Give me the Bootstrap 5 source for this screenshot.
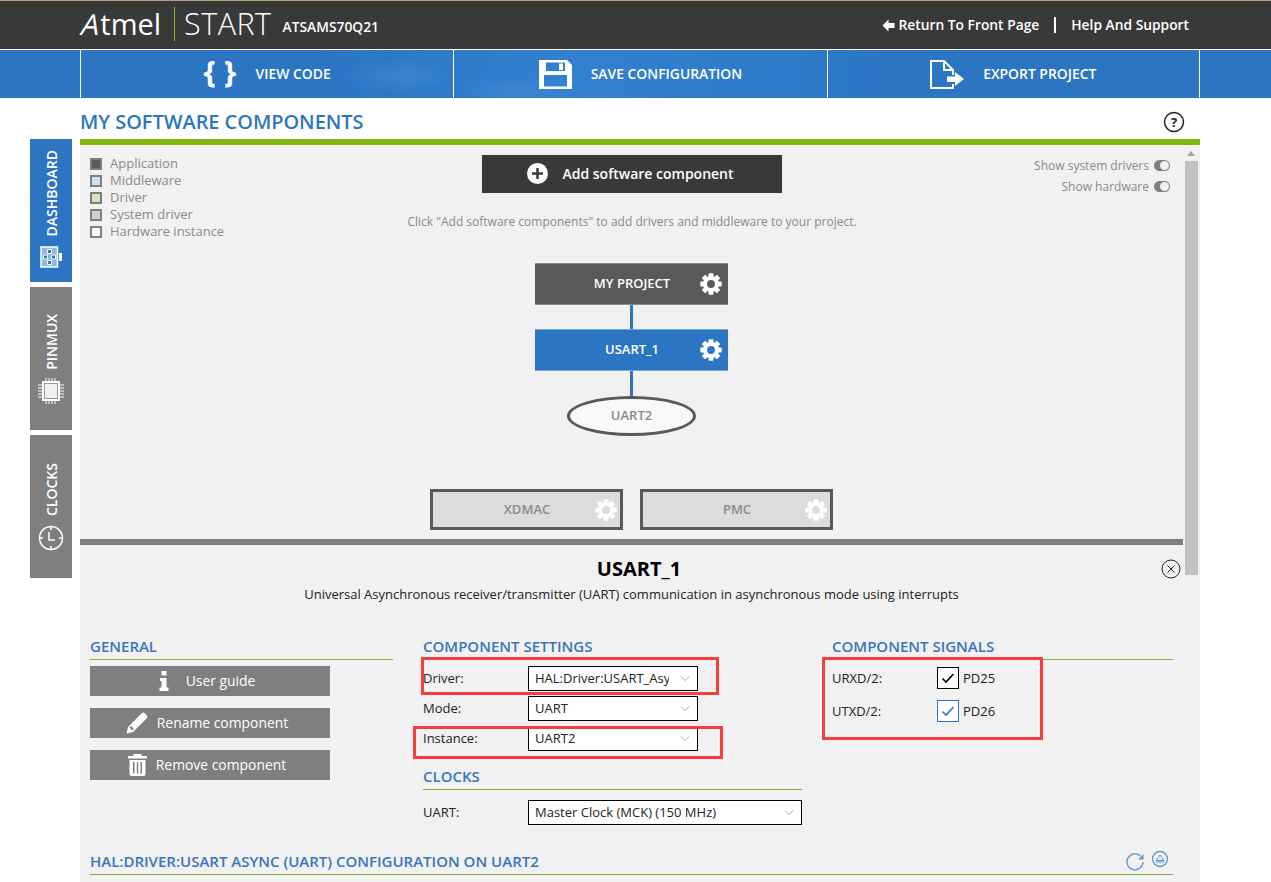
<!DOCTYPE html>
<html lang="en">
<head>
    <meta charset="UTF-8">
    <meta name="viewport" content="width=device-width, initial-scale=1.0">
    <title>Atmel START</title>
    <link rel="stylesheet" href="https://cdn.jsdelivr.net/npm/bootstrap@5.3.0/dist/css/bootstrap.min.css">
    <style>
        body {
            background: #fff;
            font-family: "Open Sans", "Liberation Sans", sans-serif;
            font-size: 13px;
            color: #222;
            height: 882px;
            overflow: hidden;
        }
        .top-bar {
            height: 50px;
            background: #383938;
            border-top: 1px solid #b79c7c;
            border-bottom: 1px solid #fff;
            padding: 0 82px 2px 82px;
            color: #fff;
        }
        .logo-atmel { font-size: 29px; font-weight: 400; width: 92px; letter-spacing: 0; }
        .logo-a { display: inline-block; transform: skewX(-14deg); }
        .logo-rule { width: 1px; height: 34px; background: #8dbb25; }
        .logo-start { font-size: 30.5px; font-weight: 300; margin-left: 9px; letter-spacing: 0.5px; }
        .logo-part { font-size: 13.8px; font-weight: 600; margin: 7px 0 0 11px; }
        .top-links { margin-top: 2px; }
        .top-link { font-size: 13.8px; font-weight: 600; color: #fff; text-decoration: none; }
        .top-rule { width: 2px; height: 16px; background: #fff; margin: 0 15px; }
        .tool-bar {
            height: 48px;
            padding-left: 80px;
            background:
                radial-gradient(ellipse 60px 18px at 400px 26px, rgba(255, 255, 255, .07), transparent),
                radial-gradient(ellipse 70px 14px at 520px 40px, rgba(255, 255, 255, .06), transparent),
                linear-gradient(90deg, #2b75c3 25%, #3280d0 45%, #2f7bca 60%, #2b75c3 70%);
        }
        .tool-item {
            width: 373.3px;
            padding-top: 1px;
            border-left: 1px solid #fff;
            color: #fff;
            font-size: 13.9px;
            font-weight: 600;
            text-decoration: none;
            gap: 19px;
        }
        .tool-item:last-child { border-right: 1px solid #fff; }
        .tool-glyph { font-size: 31px; font-weight: 700; line-height: 1; width: 33px; white-space: nowrap; margin-top: -6px; }
        .side-tabs { width: 42px; margin: 41px 8px 0 30px; gap: 5px; }
        .side-tab {
            height: 143px;
            background: #7f7f7f;
            color: #fff;
            font-size: 14px;
            font-weight: 600;
            gap: 10px;
        }
        .side-tab.is-active { background: #2b75c3; padding-bottom: 14px; }
        .side-tab.is-chip { padding-bottom: 26px; gap: 8px; }
        .side-tab.is-clock { padding-bottom: 27px; gap: 9px; }
        .side-label { writing-mode: vertical-rl; transform: rotate(180deg); }
        .work-col { width: 1120px; }
        .page-title { height: 41px; padding-top: 7px; }
        .page-title h1 { font-size: 19.9px; font-weight: 600; color: #2b75c3; margin: 0; }
        .help-mark { margin-right: 15px; }
        .work-panel {
            height: 743px;
            background: #f1f1f1;
            border-top: 6px solid #80b80f;
            position: relative;
            overflow: hidden;
        }
        .work-inner { width: 1103px; }
        .scroll-thumb { position: absolute; left: 1105px; top: 16px; width: 13px; height: 414px; background: #c1c1c1; }
        .scroll-up {
            position: absolute;
            left: 1107px;
            top: 6px;
            border: 4px solid transparent;
            border-top: 0;
            border-bottom: 5px solid #a3a3a3;
        }
        .canvas-top {
            height: 118px;
            padding: 10px 13px 0 10px;
            display: grid;
            grid-template-columns: 312px 460px 308px;
        }
        .legend-row { height: 17px; color: #8a8a8a; gap: 8px; line-height: 17px; }
        .legend-box { width: 12px; height: 12px; border: 2px solid #7f7f7f; }
        .legend-app { background: #58595b; }
        .legend-mid { background: #c9e2f7; }
        .legend-drv { background: #d5e4bd; }
        .legend-sys { background: #d0d0d0; }
        .legend-hw { background: #fff; }
        .add-btn {
            width: 300px;
            height: 38px;
            padding: 0 3px 2px 0;
            background: #383938;
            color: #fff;
            font-size: 14px;
            font-weight: 600;
            border-radius: 0;
            border: 0;
            gap: 14px;
        }
        .add-btn:hover { background: #383938; color: #fff; }
        .hint-text { color: #8a8a8a; font-size: 12px; margin-top: 20px; }
        .switch-row { color: #8a8a8a; font-size: 12px; gap: 5px; height: 21px; padding-top: 1px; }
        .mini-switch { width: 16px; height: 11px; background: #7f7f7f; border-radius: 6px; position: relative; margin-top: -1px; }
        .mini-switch::after { content: ""; position: absolute; right: 1px; top: 1px; width: 9px; height: 9px; border-radius: 50%; background: #f1f1f1; }
        .node-box {
            width: 193px;
            height: 42px;
            color: #fff;
            font-weight: 600;
            font-size: 13px;
            padding: 0 6px 0 0;
        }
        .node-name { flex: 1; text-align: center; padding-left: 29px; }
        .node-dark { background: #58595b; border-top: 1px solid #8d8d8d; border-bottom: 1px solid #8d8d8d; }
        .node-blue { background: #2b75c3; border-top: 1px solid #7fa9d9; border-bottom: 1px solid #7fa9d9; }
        .node-sys { background: #dcdcdc; border: 3px solid #58595b; color: #8a8a8a; height: 41px; padding-right: 3px; }
        .node-sys .node-name { padding-left: 26px; }
        .node-line { width: 3px; height: 24px; background: #2b75c3; }
        .node-line.is-long { height: 25px; }
        .node-oval {
            width: 129px;
            height: 40px;
            border: 3px solid #58595b;
            border-radius: 50%;
            background: #f9f9f9;
            color: #8a8a8a;
            font-weight: 600;
            font-size: 13px;
        }
        .sys-row { gap: 17px; margin-top: 53px; }
        .split-bar { height: 6px; margin-top: 9px; background: #7f7f7f; }
        .detail-head { height: 91px; padding-top: 10px; position: relative; }
        .detail-head h2 { font-size: 20px; font-weight: 700; color: #000; margin: 0 0 3px; line-height: 27px; padding-left: 15px; }
        .detail-head p { font-size: 13px; margin: 0; line-height: 18px; }
        .close-mark { position: absolute; left: 1081px; top: 14px; }
        .detail-grid {
            display: grid;
            grid-template-columns: 303px 379px 341px;
            gap: 30px;
            padding-left: 10px;
        }
        .sec-head {
            font-size: 15px;
            font-weight: 600;
            color: #3a75bd;
            height: 24px;
            line-height: 21px;
            border-bottom: 1px solid #80b32e;
            text-transform: uppercase;
            margin: 0;
        }
        .sec-head.no-rule { border-bottom-color: transparent; }
        .sec-head.is-clocks { margin-top: 15px; }
        .act-list { gap: 12px; margin-top: 6px; }
        .act-btn {
            width: 240px;
            height: 30px;
            padding: 0 6px 0 0;
            background: #7f7f7f;
            color: #fff;
            border: 0;
            border-radius: 0;
            font-size: 13.9px;
            gap: 9px;
        }
        .act-btn:hover { background: #7f7f7f; color: #fff; }
        .field-row { height: 25px; position: relative; margin-top: 5px; }
        .field-row.is-first { margin-top: 6px; }
        .field-row.is-clock { margin-top: 10px; }
        .field-label { width: 105px; font-size: 13px; }
        .field-select {
            width: 170px;
            height: 25px;
            padding: 0 28px 0 6px;
            font-size: 13px;
            line-height: 23px;
            color: #222;
            border: 1px solid #000;
            border-radius: 0;
            background-color: #fff;
            background-position: right 7px center;
            background-size: 10px 7px;
            background-image: url("data:image/svg+xml,%3csvg xmlns='http://www.w3.org/2000/svg' viewBox='0 0 12 8'%3e%3cpath fill='none' stroke='%23aaa' stroke-width='1.2' d='M1 1.5l5 5 5-5'/%3e%3c/svg%3e");
        }
        .field-select.is-wide { width: 274px; }
        .red-frame { position: absolute; border: 3px solid #f43e3f; pointer-events: none; }
        .red-driver { left: -2px; top: -9px; width: 298px; height: 38px; }
        .red-instance { left: -10px; top: 0; width: 310px; height: 33px; }
        .red-signals { left: -10px; top: 21px; width: 221px; height: 83px; }
        .signal-col { position: relative; }
        .signal-row { height: 22px; margin-top: 11px; padding-top: 1px; }
        .signal-row.is-first { margin-top: 7px; }
        .signal-check.form-check-input {
            width: 22px;
            height: 22px;
            margin: -1px 4px 0 0;
            border: 1px solid #000;
            border-radius: 0;
            background-color: #fff;
            background-size: 16px;
            background-image: url("data:image/svg+xml,%3csvg xmlns='http://www.w3.org/2000/svg' viewBox='0 0 16 16'%3e%3cpath fill='none' stroke='%23000' stroke-width='1.6' d='M2.5 8.5l3.5 3.5 7.5-8'/%3e%3c/svg%3e");
        }
        .signal-check.form-check-input.is-blue {
            border-color: #2b75c3;
            background-image: url("data:image/svg+xml,%3csvg xmlns='http://www.w3.org/2000/svg' viewBox='0 0 16 16'%3e%3cpath fill='none' stroke='%232b75c3' stroke-width='1.6' d='M2.5 8.5l3.5 3.5 7.5-8'/%3e%3c/svg%3e");
        }
        .config-head { margin: 26px 10px 0 10px; position: relative; }
        .config-icons { position: absolute; right: 4px; top: -1px; gap: 6px; }
        .config-icons svg:first-child { margin-top: 1px; }
    </style>
</head>
<body>
    <svg width="0" height="0" class="position-absolute">
        <symbol id="gear" viewBox="0 0 24 24">
            <g fill="currentColor">
                <rect x="9.300" y="0.300" width="5.400" height="5" rx="1"/>
                <rect x="9.300" y="0.300" width="5.400" height="5" rx="1" transform="rotate(45 12 12)"/>
                <rect x="9.300" y="0.300" width="5.400" height="5" rx="1" transform="rotate(90 12 12)"/>
                <rect x="9.300" y="0.300" width="5.400" height="5" rx="1" transform="rotate(135 12 12)"/>
                <rect x="9.300" y="0.300" width="5.400" height="5" rx="1" transform="rotate(180 12 12)"/>
                <rect x="9.300" y="0.300" width="5.400" height="5" rx="1" transform="rotate(225 12 12)"/>
                <rect x="9.300" y="0.300" width="5.400" height="5" rx="1" transform="rotate(270 12 12)"/>
                <rect x="9.300" y="0.300" width="5.400" height="5" rx="1" transform="rotate(315 12 12)"/>
            </g>
            <circle cx="12" cy="12" r="6.500" fill="none" stroke="currentColor" stroke-width="4.500"/>
        </symbol>
    </svg>

    <div class="top-bar d-flex align-items-center">
        <span class="logo-atmel"><span class="logo-a">A</span>tmel</span>
        <span class="logo-rule"></span>
        <span class="logo-start">START</span>
        <span class="logo-part">ATSAMS70Q21</span>
        <div class="top-links ms-auto d-flex align-items-center">
            <svg width="13" height="13" viewBox="0 0 13 13" class="me-1"><path fill="#fff" d="M6.500 0.500L0.500 6.500 6.500 12.500V9H12.500V4H6.500z"/></svg>
            <a href="#" class="top-link">Return To Front Page</a>
            <span class="top-rule"></span>
            <a href="#" class="top-link">Help And Support</a>
        </div>
    </div>

    <div class="tool-bar d-flex">
        <a href="#" class="tool-item d-flex align-items-center justify-content-center">
            <span class="tool-glyph">{ }</span><span>VIEW CODE</span>
        </a>
        <a href="#" class="tool-item d-flex align-items-center justify-content-center">
            <svg width="33" height="29" viewBox="0 0 33 29"><path fill="#fff" fill-rule="evenodd" d="M0 0H28L33 5V29H0zM7 2.500V11H26V2.500zM20 3.500H24V10H20zM5 15V26.500H28V15z"/></svg>
            <span>SAVE CONFIGURATION</span>
        </a>
        <a href="#" class="tool-item d-flex align-items-center justify-content-center">
            <svg width="34" height="29" viewBox="0 0 34 29"><path fill="none" stroke="#fff" stroke-width="2" d="M1 1H14L23 10V28H1zM14 1V10H23"/><path fill="#2b75c3" d="M17 15H25V24H17z"/><path fill="#fff" d="M17 16.500H25V12L34 19 25 26V22H17z"/></svg>
            <span>EXPORT PROJECT</span>
        </a>
    </div>

    <div class="d-flex">
        <div class="side-tabs d-flex flex-column">
            <div class="side-tab is-active d-flex flex-column align-items-center justify-content-end">
                <span class="side-label">DASHBOARD</span>
                <svg width="22" height="22" viewBox="0 0 22 22"><path fill="#8fb9e4" stroke="#fff" stroke-width="1.500" d="M1 1H17.500V21H1z"/><path fill="#fff" d="M19 7H22V15H19z"/><path fill="#2b75c3" stroke="#fff" d="M7.500 3.500H11.500V7.500H7.500zM3.500 9H7.500V13H3.500zM11.500 9H15.500V13H11.500zM7.500 14.500H11.500V18.500H7.500z"/></svg>
            </div>
            <div class="side-tab is-chip d-flex flex-column align-items-center justify-content-end">
                <span class="side-label">PINMUX</span>
                <svg width="26" height="26" viewBox="0 0 26 26"><path fill="#fff" d="M4 3H22V23H4z"/><path fill="#9a9a9a" d="M6 5H20V21H6z"/><path fill="#f2f2f2" d="M7 6H19V20H7z"/><path stroke="#fff" d="M8 0V3M11 0V3M14 0V3M17 0V3M8 23V26M11 23V26M14 23V26M17 23V26M0 7H4M0 10H4M0 13H4M0 16H4M0 19H4M22 7H26M22 10H26M22 13H26M22 16H26M22 19H26"/></svg>
            </div>
            <div class="side-tab is-clock d-flex flex-column align-items-center justify-content-end">
                <span class="side-label">CLOCKS</span>
                <svg width="26" height="26" viewBox="0 0 26 26"><circle cx="13" cy="13" r="11.500" fill="none" stroke="#fff" stroke-width="1.500"/><path fill="none" stroke="#fff" stroke-width="1.500" d="M13 1.500V5M13 21V24.500M1.500 13H5M21 13H24.500M11 7V15H17"/></svg>
            </div>
        </div>

        <div class="work-col">
            <div class="page-title d-flex align-items-center justify-content-between">
                <h1>MY SOFTWARE COMPONENTS</h1>
                <svg class="help-mark" width="22" height="22" viewBox="0 0 22 22"><circle cx="11" cy="11" r="9.500" fill="none" stroke="#222" stroke-width="1.500"/><text x="11" y="15.500" text-anchor="middle" font-size="13" font-weight="700" fill="#222" font-family="Open Sans">?</text></svg>
            </div>
            <div class="work-panel">
                <div class="scroll-up"></div>
                <div class="scroll-thumb"></div>
                <div class="work-inner">
                    <div class="canvas-top">
                        <div>
                            <div class="legend-row d-flex align-items-center"><span class="legend-box legend-app"></span>Application</div>
                            <div class="legend-row d-flex align-items-center"><span class="legend-box legend-mid"></span>Middleware</div>
                            <div class="legend-row d-flex align-items-center"><span class="legend-box legend-drv"></span>Driver</div>
                            <div class="legend-row d-flex align-items-center"><span class="legend-box legend-sys"></span>System driver</div>
                            <div class="legend-row d-flex align-items-center"><span class="legend-box legend-hw"></span>Hardware instance</div>
                        </div>
                        <div class="d-flex flex-column align-items-center">
                            <button class="btn add-btn d-flex align-items-center justify-content-center">
                                <svg width="21" height="21" viewBox="0 0 21 21"><circle cx="10.500" cy="10.500" r="10.500" fill="#fff"/><path stroke="#383938" stroke-width="2.500" d="M10.500 5V16M5 10.500H16"/></svg>
                                Add software component
                            </button>
                            <div class="hint-text">Click "Add software components" to add drivers and middleware to your project.</div>
                        </div>
                        <div class="d-flex flex-column align-items-end">
                            <div class="switch-row d-flex align-items-center">Show system drivers <span class="mini-switch"></span></div>
                            <div class="switch-row d-flex align-items-center">Show hardware <span class="mini-switch"></span></div>
                        </div>
                    </div>

                    <div class="d-flex flex-column align-items-center">
                        <div class="node-box node-dark d-flex align-items-center"><span class="node-name">MY PROJECT</span><svg width="22" height="22"><use href="#gear"/></svg></div>
                        <div class="node-line"></div>
                        <div class="node-box node-blue d-flex align-items-center"><span class="node-name">USART_1</span><svg width="22" height="22"><use href="#gear"/></svg></div>
                        <div class="node-line is-long"></div>
                        <div class="node-oval d-flex align-items-center justify-content-center">UART2</div>
                        <div class="sys-row d-flex">
                            <div class="node-box node-sys d-flex align-items-center"><span class="node-name">XDMAC</span><svg width="22" height="22" class="text-white"><use href="#gear"/></svg></div>
                            <div class="node-box node-sys d-flex align-items-center"><span class="node-name">PMC</span><svg width="22" height="22" class="text-white"><use href="#gear"/></svg></div>
                        </div>
                    </div>
                    <div class="split-bar"></div>

                    <div class="detail-head text-center">
                        <h2>USART_1</h2>
                        <p>Universal Asynchronous receiver/transmitter (UART) communication in asynchronous mode using interrupts</p>
                        <svg class="close-mark" width="20" height="20" viewBox="0 0 20 20"><circle cx="10" cy="10" r="9" fill="none" stroke="#222"/><path stroke="#222" d="M6.500 6.500L13.500 13.500M13.500 6.500L6.500 13.500"/></svg>
                    </div>

                    <div class="detail-grid">
                        <div>
                            <h3 class="sec-head">General</h3>
                            <div class="act-list d-flex flex-column">
                                <button class="btn act-btn d-flex align-items-center justify-content-center">
                                    <svg width="10" height="20" viewBox="0 0 10 20"><path fill="#fff" d="M2.500 0H7.500V4.500H2.500zM1 7H7.500V16.500H9.500V20H0.500V16.500H2.500V10H1z"/></svg>
                                    <span class="ms-2">User guide</span>
                                </button>
                                <button class="btn act-btn d-flex align-items-center justify-content-center">
                                    <svg width="22" height="22" viewBox="0 0 22 22"><path fill="#fff" d="M0.500 21.500L2 15 15.500 1.500Q17 0 18.500 1L21 3.500Q22 5 20.500 6.500L7 20zM3.500 15.500L6.500 18.500 8 17 5 14z"/></svg>
                                    <span>Rename component</span>
                                </button>
                                <button class="btn act-btn d-flex align-items-center justify-content-center">
                                    <svg width="19" height="22" viewBox="0 0 19 22"><path fill="#fff" fill-rule="evenodd" d="M6 0H13L14 2H19V4.500H0V2H5zM1.500 6H17.500V20Q17.500 22 15.500 22H3.500Q1.500 22 1.500 20zM5 8V19.500H6.500V8zM8.800 8V19.500H10.200V8zM12.500 8V19.500H14V8z"/></svg>
                                    <span>Remove component</span>
                                </button>
                            </div>
                        </div>
                        <div>
                            <h3 class="sec-head no-rule">Component settings</h3>
                            <div class="field-row is-first d-flex align-items-center">
                                <span class="field-label">Driver:</span>
                                <select class="form-select field-select"><option>HAL:Driver:USART_Async</option></select>
                                <span class="red-frame red-driver"></span>
                            </div>
                            <div class="field-row d-flex align-items-center">
                                <span class="field-label">Mode:</span>
                                <select class="form-select field-select"><option>UART</option></select>
                            </div>
                            <div class="field-row d-flex align-items-center">
                                <span class="field-label">Instance:</span>
                                <select class="form-select field-select"><option>UART2</option></select>
                                <span class="red-frame red-instance"></span>
                            </div>
                            <h3 class="sec-head is-clocks">Clocks</h3>
                            <div class="field-row is-clock d-flex align-items-center">
                                <span class="field-label">UART:</span>
                                <select class="form-select field-select is-wide"><option>Master Clock (MCK) (150 MHz)</option></select>
                            </div>
                        </div>
                        <div class="signal-col">
                            <h3 class="sec-head">Component signals</h3>
                            <div class="signal-row is-first d-flex align-items-center">
                                <span class="field-label">URXD/2:</span>
                                <input class="form-check-input signal-check" type="checkbox" checked>
                                <span>PD25</span>
                            </div>
                            <div class="signal-row d-flex align-items-center">
                                <span class="field-label">UTXD/2:</span>
                                <input class="form-check-input signal-check is-blue" type="checkbox" checked>
                                <span>PD26</span>
                            </div>
                            <span class="red-frame red-signals"></span>
                        </div>
                    </div>

                    <div class="config-head">
                        <h3 class="sec-head">HAL:Driver:USART Async (UART) Configuration on UART2</h3>
                        <div class="config-icons d-flex">
                            <svg width="20" height="20" viewBox="0 0 20 20"><path fill="none" stroke="#5b96d3" stroke-width="1.300" d="M15.500 5A8 8 0 1 0 18 11"/><path fill="#5b96d3" d="M18.500 3V8.500H13z"/></svg>
                            <svg width="18" height="18" viewBox="0 0 18 18"><circle cx="9" cy="9" r="7.500" fill="none" stroke="#5b96d3" stroke-width="1.300"/><path fill="none" stroke="#5b96d3" d="M9 5L13 10.500H5z"/><path stroke="#5b96d3" d="M4.500 12H13.500"/></svg>
                        </div>
                    </div>
                </div>
            </div>
        </div>
    </div>

    <script src="https://cdn.jsdelivr.net/npm/bootstrap@5.3.0/dist/js/bootstrap.bundle.min.js"></script>
</body>
</html>
